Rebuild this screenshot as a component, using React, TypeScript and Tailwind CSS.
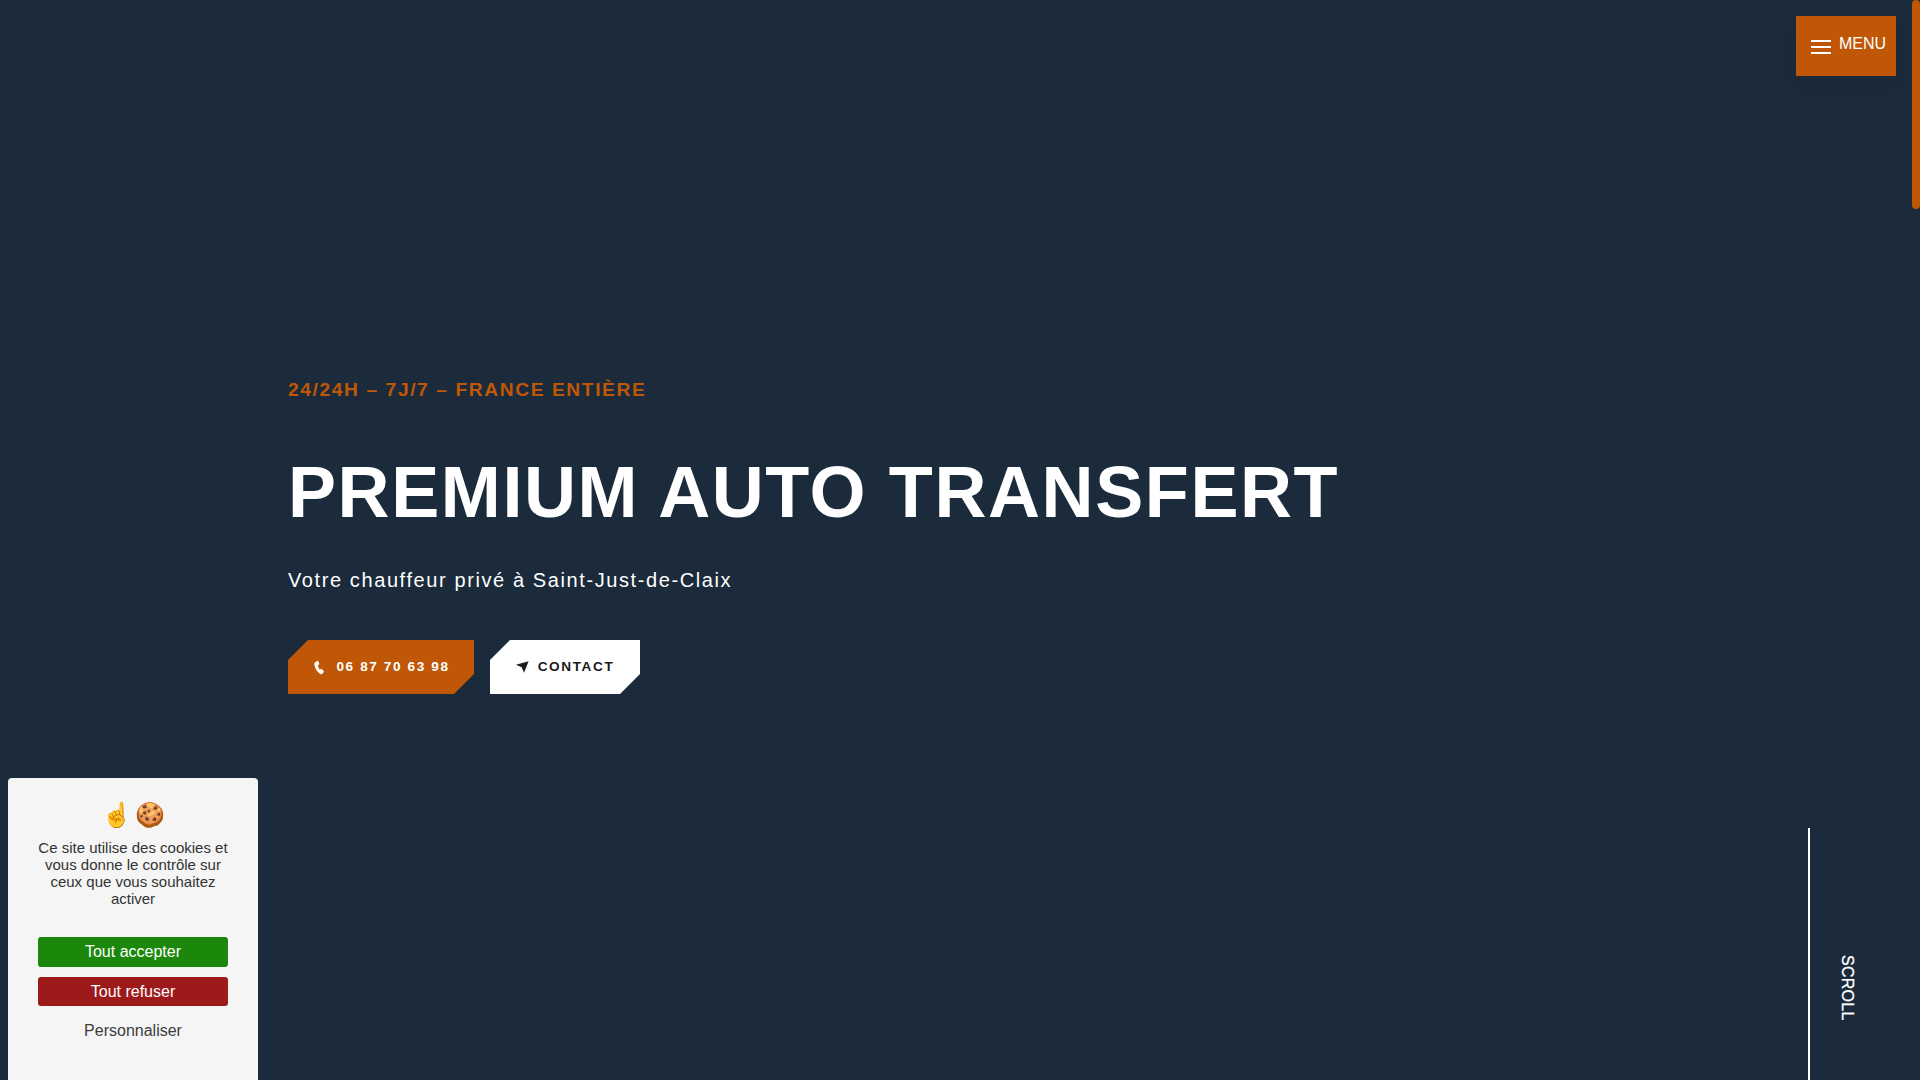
const sans = 'font-["Liberation_Sans",Arial,sans-serif]';

function PhoneIcon() {
  return (
    <svg viewBox="0 0 12 16" className="h-[15px] w-[11px] fill-white">
      <path d="M1 2.6 3.4.8c.4-.3.8-.2 1 .2l1.300 2.600c.2.400.1.700-.2 1L4.300 5.500c.1 1.500.8 3.300 2 4.700l1.500-.6c.4-.1.700 0 1 .3l1.800 2.300c.3.400.2.800-.1 1.100l-1.800 1.700c-.4.400-1 .4-1.500.1C3.700 13.300.6 8.300.4 3.800c0-.5.200-.9.600-1.200Z" />
    </svg>
  );
}

function ArrowIcon() {
  return (
    <svg viewBox="0 0 13 11.500" className="h-[12px] w-[13px] fill-[#1a1a1a]">
      <path d="M12.600 0 0 3.600l5.700 2.300 2.300 5.500Z" />
    </svg>
  );
}

function CookieBanner() {
  return (
    <div className="absolute left-2 top-[778px] flex h-[302px] w-[250px] flex-col items-center rounded-t-[4px] bg-[#f5f5f5] px-[30px] pt-[22px] text-[#333333]">
      <div className="flex h-[30px] items-center gap-[3px] pl-[1px] text-[24px] leading-none font-['Noto_Color_Emoji',sans-serif]">
        <span>☝️</span>
        <span>🍪</span>
      </div>
      <p className="mt-[9px] w-[190px] text-center text-[15px] leading-[17px]">
        Ce site utilise des cookies et vous donne le contrôle sur ceux que vous souhaitez activer
      </p>
      <button className="mt-[30px] h-[30px] w-[190px] rounded-[3px] bg-[#1b880c] text-[16px] text-white">
        Tout accepter
      </button>
      <button className="mt-[10px] h-[29px] w-[190px] rounded-[3px] bg-[#9c1a1a] text-[16px] text-white">
        Tout refuser
      </button>
      <button className="mt-[10px] h-[30px] w-[190px] text-[16px] text-[#3c3c3c]">Personnaliser</button>
    </div>
  );
}

export default function App() {
  return (
    <div className={`relative h-screen w-full overflow-hidden bg-[#1b2b3c] ${sans}`}>
      <main className="flex h-full flex-col pl-[288px] pt-[379px]">
        <p className="text-[19.2px] font-bold leading-[22px] tracking-[1.6px] text-[#c05706]">
          24/24H – 7J/7 – FRANCE ENTIÈRE
        </p>
        <h1 className="mt-[51px] text-[72px] font-bold leading-[80px] tracking-[1.6px] text-white">
          PREMIUM AUTO TRANSFERT
        </h1>
        <p className="mt-[36px] text-[20px] leading-[24px] tracking-[1.6px] text-white">
          Votre chauffeur privé à Saint-Just-de-Claix
        </p>
        <div className="mt-[48px] flex gap-4">
          <a className="flex h-[54px] w-[186px] items-center justify-center gap-[11px] bg-[#c05706] pl-[2px] text-[13.6px] font-bold tracking-[1.6px] text-white [clip-path:polygon(20px_0,100%_0,100%_calc(100%-20px),calc(100%-20px)_100%,0_100%,0_20px)]">
            <PhoneIcon />
            06 87 70 63 98
          </a>
          <a className="flex h-[54px] w-[150px] items-center justify-center gap-[9px] bg-white text-[13.6px] font-bold tracking-[1.6px] text-[#1a1a1a] [clip-path:polygon(20px_0,100%_0,100%_calc(100%-20px),calc(100%-20px)_100%,0_100%,0_20px)]">
            <ArrowIcon />
            CONTACT
          </a>
        </div>
      </main>

      <button className="absolute right-6 top-4 flex h-[60px] w-[100px] items-start gap-[8px] bg-[#c05706] pl-[15px] pt-[19px] text-[16px] leading-[18px] text-white shadow-[0_8px_20px_rgba(0,0,0,0.05)]">
        <span className="mt-[5px] flex w-5 flex-col gap-[4px]">
          <span className="h-[2px] bg-white" />
          <span className="h-[2px] bg-white" />
          <span className="h-[2px] bg-white" />
        </span>
        MENU
      </button>

      <div className="absolute right-0 top-0 h-[209px] w-2 rounded-[4px] bg-[#c05706]" />

      <div className="absolute bottom-0 left-[1808px] top-[828px] w-[2px] bg-white" />
      <span className="absolute left-[1838px] top-[955px] whitespace-nowrap text-[16px] leading-[18px] tracking-[0.25px] text-white [-webkit-text-stroke:0.3px_white] [writing-mode:vertical-rl]">
        SCROLL
      </span>

      <CookieBanner />
    </div>
  );
}
